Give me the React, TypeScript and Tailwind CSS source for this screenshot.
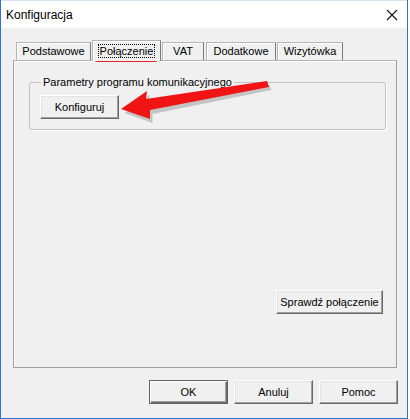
import React from "react";

const font = { fontFamily: '"Liberation Sans", Arial, sans-serif' };

function Btn({ children, w, def }: { children: React.ReactNode; w: string; def?: boolean }) {
  return (
    <div
      className={
        "h-[24px] flex items-center justify-center text-[11px] text-black bg-[#f0f0f0] " +
        w +
        (def
          ? " border border-[#646464] shadow-[inset_1px_1px_0_#ffffff,inset_-1px_-1px_0_#696969,inset_-2px_-2px_0_#a0a0a0]"
          : " border border-t-white border-l-white border-r-[#696969] border-b-[#696969] shadow-[inset_-1px_-1px_0_#a0a0a0,inset_1px_1px_0_#e3e3e3]")
      }
    >
      {children}
    </div>
  );
}

function Tab({ children, w, ml }: { children: React.ReactNode; w: string; ml: string }) {
  return (
    <div
      className={
        "h-[18px] flex items-center justify-center text-[11px] text-black border-t border-l border-r border-t-[#b4b4b4] border-l-[#b4b4b4] border-r-[#7a7a7a] shadow-[inset_1px_1px_0_#ffffff] " +
        w +
        " " +
        ml
      }
    >
      {children}
    </div>
  );
}

export default function App() {
  return (
    <div className="relative w-[410px] h-[419px] bg-white" style={font}>
      <div className="w-[408px] h-[419px] flex flex-col border-l border-r border-b border-[#2a78cc]">
        {/* Title bar */}
        <div className="h-[28px] bg-white flex items-center justify-between pl-[5px] pr-[9px] border-t border-[#d6e4f3]">
          <span className="text-[12px] text-black">Konfiguracja</span>
          <svg width="12" height="12" viewBox="0 0 12 12">
            <path d="M1 1 L11 11 M11 1 L1 11" stroke="#111" strokeWidth="1.1" fill="none" />
          </svg>
        </div>
        {/* Body */}
        <div className="flex-1 bg-[#f0f0f0] flex flex-col pt-[12px] pl-[12px] pr-[10px]">
          {/* Tabs */}
          <div className="h-[20px] flex items-end">
            <Tab w="w-[75px]" ml="ml-[3px]">Podstawowe</Tab>
            <div className="relative z-10 -mb-px h-[21px] w-[69px] ml-[1px] bg-[#f0f0f0] border-t border-l border-r border-t-[#b4b4b4] border-l-[#b4b4b4] border-r-[#7a7a7a] shadow-[inset_1px_1px_0_#ffffff] flex items-center justify-center text-[11px] text-black">
              <span className="border border-dotted border-black px-[1px] leading-[12px]">Połączenie</span>
            </div>
            <Tab w="w-[42px]" ml="ml-[1px]">VAT</Tab>
            <Tab w="w-[70px]" ml="ml-[2px]">Dodatkowe</Tab>
            <Tab w="w-[66px]" ml="ml-[1px]">Wizytówka</Tab>
          </div>
          {/* Panel */}
          <div className="h-[308px] flex flex-col border border-[#a0a0a0] border-t-[#b4b4b4] shadow-[inset_1px_1px_0_#ffffff]">
            <div className="relative mt-[21px] ml-[15px] mr-[10px] h-[48px] border border-[#c2c2c2] rounded-[3px] shadow-[1px_1px_0_#ffffff] pt-[12px] pl-[10px]">
              <span className="absolute -top-[8px] left-[11px] px-[2px] bg-[#f0f0f0] text-[11px] leading-[14px] text-black">
                Parametry programu komunikacyjnego
              </span>
              <Btn w="w-[79px]">Konfiguruj</Btn>
            </div>
            <div className="flex-1" />
            <div className="flex justify-end pr-[13px] mb-[53px]">
              <Btn w="w-[107px]">Sprawdź połączenie</Btn>
            </div>
          </div>
          {/* Bottom buttons */}
          <div className="flex justify-end gap-[6px] mt-[12px] -mr-px">
            <Btn w="w-[79px]" def>
              OK
            </Btn>
            <Btn w="w-[79px]">Anuluj</Btn>
            <Btn w="w-[79px]">Pomoc</Btn>
          </div>
        </div>
      </div>
      {/* Red highlight around selected tab */}
      <div className="absolute left-[92px] top-[40px] w-[68px] h-[22px] border-2 border-[#e3262b] rounded-[5px] pointer-events-none" />
      {/* Red arrow */}
      <svg className="absolute left-0 top-0 pointer-events-none" width="410" height="419" viewBox="0 0 410 419">
        <polygon
          points="123,111 148,93 147,101 268,83 270,88 151,112 151,121"
          fill="#000"
          opacity="0.18"
          transform="translate(1.5,2)"
        />
        <polygon points="121,109 147,91 146,99 267,81 269,87 150,110 150,119" fill="#f11414" />
      </svg>
    </div>
  );
}
